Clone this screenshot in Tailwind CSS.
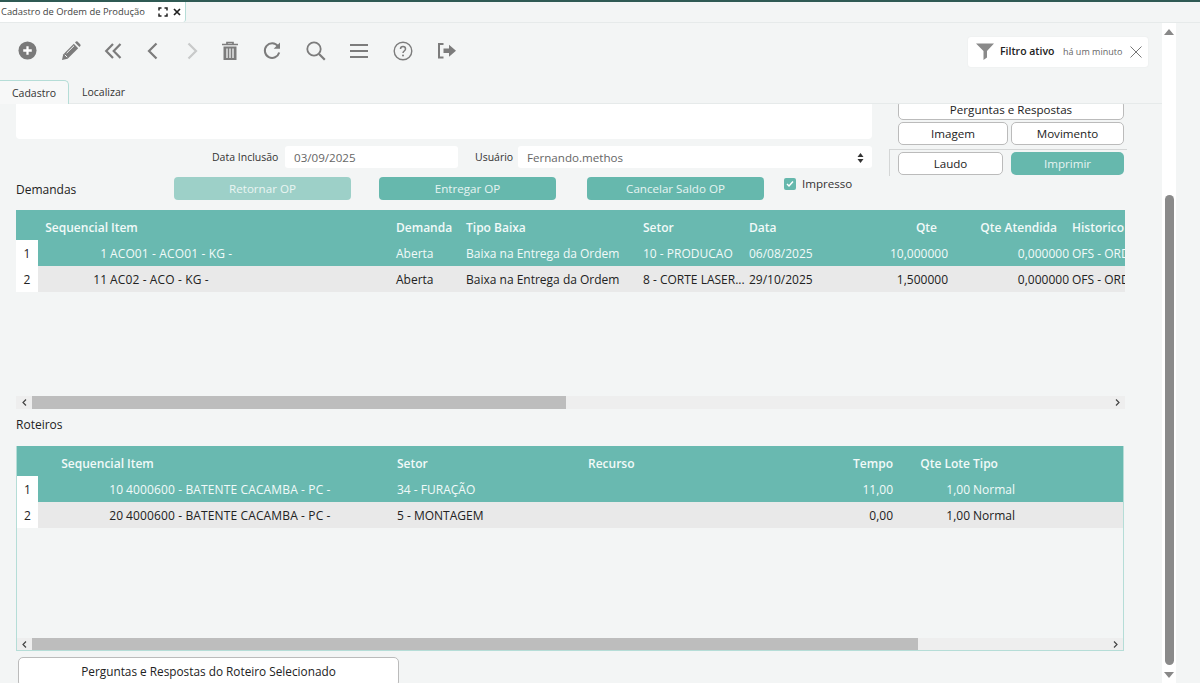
<!DOCTYPE html>
<html lang="pt-BR">

<head>
  <meta charset="UTF-8">
  <meta name="viewport" content="width=device-width, initial-scale=1.0">
  <script src="https://cdn.jsdelivr.net/npm/@tailwindcss/browser@4"></script>
  <title>Cadastro de Ordem de Produção</title>
</head>

<body class="h-[683px] overflow-hidden bg-[#f3f5f5] font-['Open_Sans',sans-serif] text-[12px] text-[#222]">
  <div class="h-[2px] bg-[#2f5a54]"></div>

  <!-- tab strip -->
  <div class="flex h-[21px] border-b border-[#e6eaea]">
    <div class="flex w-[186px] items-center rounded-br-[3px] border-r border-[#b5ddd7] bg-white pl-[1px] text-[9.4px] whitespace-nowrap text-[#444]">
      <span class="w-[145px]">Cadastro de Ordem de Produção</span>
      <svg class="ml-[12px] h-[10px] w-[10px]" viewBox="0 0 10 10" fill="none" stroke="#222" stroke-width="1.5">
        <path d="M1 3.5V1h2.5M6.5 1H9v2.500M9 6.500V9H6.500M3.500 9H1V6.500" />
      </svg>
      <svg class="ml-[5px] h-[8px] w-[8px]" viewBox="0 0 8 8" fill="none" stroke="#222" stroke-width="1.7">
        <path d="M1 1l6 6M7 1L1 7" />
      </svg>
    </div>
  </div>

  <div class="flex h-[660px]">
    <div class="w-[1162px] overflow-hidden">
      <!-- toolbar -->
      <div class="flex h-[57px] items-center justify-between pr-[14px]">
        <div class="mb-[2px] grid grid-cols-[43px_43px_41px_39px_39px_38px_46px_42px_44px_44px_44px] pl-[6px]">
          <div class="flex items-center justify-center">
            <svg class="h-[19px] w-[19px]" viewBox="0 0 20 20"><circle cx="10" cy="10" r="9.500" fill="#7a7a7a" /><path d="M5.500 10h9M10 5.500v9" stroke="#fff" stroke-width="2.400" /></svg>
          </div>
          <div class="flex justify-center">
            <svg class="h-[20px] w-[20px]" viewBox="0 0 20 20"><path d="M1 19l1.200-5.600L12.800 2.800l4.400 4.400L6.600 17.800z" fill="#7c7c7c" /><path d="M3.800 13.800l2.400 2.400M5.600 12.200L13 4.800" stroke="#f3f5f5" stroke-width="1" fill="none" /><path d="M14 1.600l1-1q.8-.5 1.500 0l2.900 2.900q.5.700 0 1.500l-1 1z" fill="#7c7c7c" /></svg>
          </div>
          <div class="flex justify-center">
            <svg class="h-[20px] w-[20px]" viewBox="0 0 20 20" fill="none" stroke="#7c7c7c" stroke-width="2.200"><path d="M10 3L3.200 10l6.800 7M17.500 3l-6.800 7 6.800 7" /></svg>
          </div>
          <div class="flex justify-center">
            <svg class="h-[20px] w-[20px]" viewBox="0 0 20 20" fill="none" stroke="#7c7c7c" stroke-width="2.200"><path d="M13.500 2.500L6 10l7.500 7.500" /></svg>
          </div>
          <div class="flex justify-center">
            <svg class="h-[20px] w-[20px]" viewBox="0 0 20 20" fill="none" stroke="#c8caca" stroke-width="2.200"><path d="M6.500 2.500L14 10l-7.500 7.500" /></svg>
          </div>
          <div class="flex justify-center">
            <svg class="h-[20px] w-[18px]" viewBox="0 0 18 20"><path d="M1 3.500h16M6 3.500V1.500h6v2" fill="none" stroke="#7c7c7c" stroke-width="1.700" /><path d="M2.500 5.500h13V19h-13z" fill="#7c7c7c" /><path d="M6 7.500v9.500M9 7.500v9.500M12 7.500v9.500" stroke="#f3f5f5" stroke-width="1.300" /></svg>
          </div>
          <div class="flex justify-center">
            <svg class="h-[20px] w-[20px]" viewBox="0 0 20 20" fill="none"><path d="M16 5.200A7.300 7.300 0 1 0 17.200 11.500" stroke="#7c7c7c" stroke-width="2" /><path d="M18 1.500v6.300h-6.300z" fill="#7c7c7c" /></svg>
          </div>
          <div class="flex justify-center">
            <svg class="h-[20px] w-[20px]" viewBox="0 0 20 20" fill="none" stroke="#7c7c7c"><circle cx="8" cy="8" r="6.700" stroke-width="1.800" /><path d="M13 13l5.800 5.800" stroke-width="2.200" /></svg>
          </div>
          <div class="flex justify-center">
            <svg class="h-[20px] w-[20px]" viewBox="0 0 20 20" stroke="#7c7c7c" stroke-width="1.900"><path d="M1 4h18M1 10h18M1 16h18" /></svg>
          </div>
          <div class="flex justify-center">
            <svg class="h-[20px] w-[20px]" viewBox="0 0 20 20" fill="none"><circle cx="10" cy="10" r="8.800" stroke="#7c7c7c" stroke-width="1.400" /><path d="M7.500 8c0-3.300 5-3.300 5 0 0 2-2.500 2-2.500 4" stroke="#7c7c7c" stroke-width="1.500" /><circle cx="10" cy="14.600" r="1" fill="#7c7c7c" /></svg>
          </div>
          <div class="flex justify-center">
            <svg class="h-[20px] w-[20px]" viewBox="0 0 20 20"><path d="M6.500 3H2v13.500h4.500" fill="none" stroke="#7c7c7c" stroke-width="2" /><path d="M6.500 7.500h5.500V3.700l7 6-7 6v-3.800H6.500z" fill="#7c7c7c" /></svg>
          </div>
        </div>

        <div class="flex h-[30px] w-[180px] items-center rounded-[3px] bg-white pl-[8px] whitespace-nowrap shadow-[0_0_2px_rgba(0,0,0,0.06)]">
          <svg class="h-[17px] w-[18px]" viewBox="0 0 18 17" fill="#8a8a8a"><path d="M0 .5h18L11 8v6.500L7.500 17V8z" /></svg>
          <span class="ml-[6px] w-[56px] text-[10.5px] font-semibold text-[#222]">Filtro ativo</span>
          <span class="ml-[7px] w-[60px] text-[9px] text-[#666]">há um minuto</span>
          <svg class="ml-[7px] h-[12px] w-[12px]" viewBox="0 0 12 12" fill="none" stroke="#777"><path d="M.5.500l11 11M11.500.500l-11 11" /></svg>
        </div>
      </div>

      <!-- tabs -->
      <div class="flex h-[24px] border-b border-[#e6eaea] text-[10.5px] text-[#333]">
        <div class="flex w-[69px] -mb-[1px] items-center justify-center rounded-tr-[5px] border-t border-r border-[#b5ddd7] bg-[#f7f8f8] pt-[3px]">Cadastro</div>
        <div class="ml-[13px] flex items-center pt-[3px]">Localizar</div>
      </div>

      <!-- form top -->
      <div class="flex h-[72px] pl-[16px] text-[11.6px]">
        <div class="w-[856px]">
          <div class="h-[35px] rounded-b-[4px] bg-white"></div>
          <div class="mt-[7px] flex h-[22px] items-center">
            <span class="ml-[196px] w-[67px] pt-[1px] text-[10.500px] whitespace-nowrap text-[#333]">Data Inclusão</span>
            <div class="ml-[6px] flex h-[22px] w-[173px] items-center rounded-[3px] bg-white pt-[1px] pl-[9px] text-[#666]">03/09/2025</div>
            <span class="ml-[17px] w-[38px] pt-[1px] text-[10.500px] text-[#333]">Usuário</span>
            <div class="ml-[5px] flex h-[22px] flex-1 items-center justify-between rounded-[3px] bg-white pt-[1px] pr-[8px] pl-[9px] text-[#666]">
              <span>Fernando.methos</span>
              <svg class="h-[10px] w-[7px]" viewBox="0 0 7 10" fill="#333"><path d="M3.500 0l3 4h-6zM3.500 10l-3-4h6z" /></svg>
            </div>
          </div>
        </div>

        <div class="ml-[17px] w-[238px] overflow-hidden">
          <div class="pr-[3px] pl-[9px]">
            <div class="-mt-[4px] flex h-[20px] items-center justify-center rounded-[5px] border border-[#bbb] bg-white">Perguntas e Respostas</div>
            <div class="mt-[2px] flex gap-[3px]">
              <div class="flex h-[23px] w-[110px] items-center justify-center rounded-[5px] border border-[#bbb] bg-white pt-[1px]">Imagem</div>
              <div class="flex h-[23px] flex-1 items-center justify-center rounded-[5px] border border-[#bbb] bg-white pt-[1px]">Movimento</div>
            </div>
          </div>
          <div class="mt-[4px] flex h-[27px] gap-[8px] border-t border-l border-[#d4d6d6] pt-[2px] pr-[3px] pl-[8px]">
            <div class="flex h-[23px] w-[105px] items-center justify-center rounded-[5px] border border-[#bbb] bg-white pt-[1px]">Laudo</div>
            <div class="flex h-[23px] flex-1 items-center justify-center rounded-[5px] bg-[#66b8ad] pt-[1px] text-[#e6f4f2]">Imprimir</div>
          </div>
        </div>
      </div>

      <!-- demandas -->
      <div class="mt-[1px] flex h-[23px] pl-[16px] text-[11.6px]">
        <span class="mt-[4px] w-[158px] text-[12px] text-[#222]">Demandas</span>
        <div class="flex h-[23px] w-[177px] items-center justify-center rounded-[4px] bg-[#9dd0c8] text-[#eaf5f3]">Retornar OP</div>
        <div class="ml-[28px] flex h-[23px] w-[177px] items-center justify-center rounded-[4px] bg-[#66b8ad] text-[#e6f4f2]">Entregar OP</div>
        <div class="ml-[31px] flex h-[23px] w-[177px] items-center justify-center rounded-[4px] bg-[#66b8ad] text-[#e6f4f2]">Cancelar Saldo OP</div>
        <div class="ml-[20px] flex h-[14px] items-center">
          <div class="flex h-[12px] w-[12px] items-center justify-center rounded-[2px] bg-[#66b8ad]">
            <svg class="h-[8px] w-[8px]" viewBox="0 0 8 8" fill="none" stroke="#fff" stroke-width="1.500"><path d="M1 4l2 2 4-4.500" /></svg>
          </div>
          <span class="ml-[6px] text-[#333]">Impresso</span>
        </div>
      </div>

      <!-- grid demandas -->
      <div class="mt-[10px] ml-[16px] flex h-[199px] w-[1109px] flex-col overflow-hidden">
        <div class="grid h-[30px] shrink-0 grid-cols-[92px_288px_70px_177px_106px_100px_99px_121px_56px] items-center bg-[#69b9b0] pt-[6px] font-semibold whitespace-nowrap text-[#f2faf9]">
          <span class="text-right">Sequencial</span><span class="pl-[3px]">Item</span><span>Demanda</span><span>Tipo Baixa</span><span>Setor</span><span>Data</span><span class="pr-[11px] text-right">Qte</span><span class="pr-[12px] text-right">Qte Atendida</span><span class="pl-[3px]">Historico</span>
        </div>
        <div class="grid h-[26px] shrink-0 grid-cols-[22px_69px_289px_70px_177px_106px_100px_99px_121px_56px] items-center whitespace-nowrap text-[#f2faf9]">
          <span class="flex h-full items-center justify-center bg-white pt-[2px] text-[#222]">1</span>
          <span class="col-span-9 grid h-full grid-cols-subgrid items-center bg-[#69b9b0] pt-[2px]">
            <span class="text-right">1</span><span class="pl-[3px] tracking-[0.13px]">ACO01 - ACO01 - KG -</span><span>Aberta</span><span>Baixa na Entrega da Ordem</span><span>10 - PRODUCAO</span><span>06/08/2025</span><span class="text-right">10,000000</span><span class="text-right">0,000000</span><span class="overflow-hidden pl-[3px]">OFS - ORDEM</span>
          </span>
        </div>
        <div class="grid h-[26px] shrink-0 grid-cols-[22px_69px_289px_70px_177px_106px_100px_99px_121px_56px] items-center whitespace-nowrap">
          <span class="flex h-full items-center justify-center bg-white pt-[1px]">2</span>
          <span class="col-span-9 grid h-full grid-cols-subgrid items-center bg-[#e9e9e9] pt-[1px]">
            <span class="text-right">11</span><span class="pl-[3px] tracking-[0.13px]">AC02 - ACO - KG -</span><span>Aberta</span><span>Baixa na Entrega da Ordem</span><span>8 - CORTE LASER...</span><span>29/10/2025</span><span class="text-right">1,500000</span><span class="text-right">0,000000</span><span class="overflow-hidden pl-[3px]">OFS - ORDEM</span>
          </span>
        </div>
        <div class="mt-auto flex h-[13px] items-center bg-[#eeeeee]">
          <div class="flex h-full w-[16px] items-center justify-center">
            <svg class="h-[7px] w-[5px]" viewBox="0 0 5 7" fill="none" stroke="#444" stroke-width="1.200"><path d="M4 .5l-3 3 3 3" /></svg>
          </div>
          <div class="h-full w-[534px] bg-[#bdbdbd]"></div>
          <svg class="mr-[5px] ml-auto h-[7px] w-[5px]" viewBox="0 0 5 7" fill="none" stroke="#444" stroke-width="1.200"><path d="M1 .5l3 3-3 3" /></svg>
        </div>
      </div>

      <div class="mt-[7px] ml-[16px] h-[30px] text-[#222]">Roteiros</div>

      <!-- grid roteiros -->
      <div class="ml-[16px] flex h-[205px] w-[1108px] flex-col overflow-hidden border-r border-b border-l border-[#b5ddd7]">
        <div class="grid h-[30px] shrink-0 grid-cols-[107px_273px_191px_200px_105px_77px_1fr] items-center bg-[#69b9b0] pt-[6px] font-semibold whitespace-nowrap text-[#f2faf9]">
          <span class="text-right">Sequencial</span><span class="pl-[3px]">Item</span><span>Setor</span><span>Recurso</span><span class="text-right">Tempo</span><span class="text-right">Qte Lote</span><span class="pl-[3px]">Tipo</span>
        </div>
        <div class="grid h-[26px] shrink-0 grid-cols-[21px_85px_274px_191px_200px_105px_77px_1fr] items-center whitespace-nowrap text-[#f2faf9]">
          <span class="flex h-full items-center justify-center bg-white pt-[2px] text-[#222]">1</span>
          <span class="col-span-7 grid h-full grid-cols-subgrid items-center bg-[#69b9b0] pt-[2px]">
            <span class="text-right">10</span><span class="pl-[3px] tracking-[0.13px]">4000600 - BATENTE CACAMBA - PC -</span><span>34 - FURAÇÃO</span><span></span><span class="text-right">11,00</span><span class="text-right">1,00</span><span class="pl-[3px]">Normal</span>
          </span>
        </div>
        <div class="grid h-[26px] shrink-0 grid-cols-[21px_85px_274px_191px_200px_105px_77px_1fr] items-center whitespace-nowrap">
          <span class="flex h-full items-center justify-center bg-white pt-[1px]">2</span>
          <span class="col-span-7 grid h-full grid-cols-subgrid items-center bg-[#e9e9e9] pt-[1px]">
            <span class="text-right">20</span><span class="pl-[3px] tracking-[0.13px]">4000600 - BATENTE CACAMBA - PC -</span><span>5 - MONTAGEM</span><span></span><span class="text-right">0,00</span><span class="text-right">1,00</span><span class="pl-[3px]">Normal</span>
          </span>
        </div>
        <div class="mt-auto flex h-[12px] items-center bg-[#eeeeee]">
          <div class="flex h-full w-[15px] items-center justify-center">
            <svg class="h-[7px] w-[5px]" viewBox="0 0 5 7" fill="none" stroke="#444" stroke-width="1.200"><path d="M4 .5l-3 3 3 3" /></svg>
          </div>
          <div class="h-full w-[886px] bg-[#bdbdbd]"></div>
          <svg class="mr-[5px] ml-auto h-[7px] w-[5px]" viewBox="0 0 5 7" fill="none" stroke="#444" stroke-width="1.200"><path d="M1 .5l3 3-3 3" /></svg>
        </div>
      </div>

      <div class="mt-[6px] ml-[18px] flex h-[30px] w-[381px] items-center justify-center rounded-[5px] border border-[#bbb] bg-white text-[11.800px]">Perguntas e Respostas do Roteiro Selecionado</div>
    </div>

    <!-- page scrollbar -->
    <div class="relative w-[14px] bg-white">
      <svg class="absolute top-[6px] left-[2px] h-[6px] w-[10px]" viewBox="0 0 10 6" fill="#888"><path d="M5 0l5 6H0z" /></svg>
      <div class="absolute top-[172px] left-[3px] h-[470px] w-[9px] rounded-[5px] bg-[#8a8a8a]"></div>
      <svg class="absolute bottom-[5px] left-[2px] h-[6px] w-[10px]" viewBox="0 0 10 6" fill="#888"><path d="M5 6L0 0h10z" /></svg>
    </div>
  </div>
</body>

</html>
